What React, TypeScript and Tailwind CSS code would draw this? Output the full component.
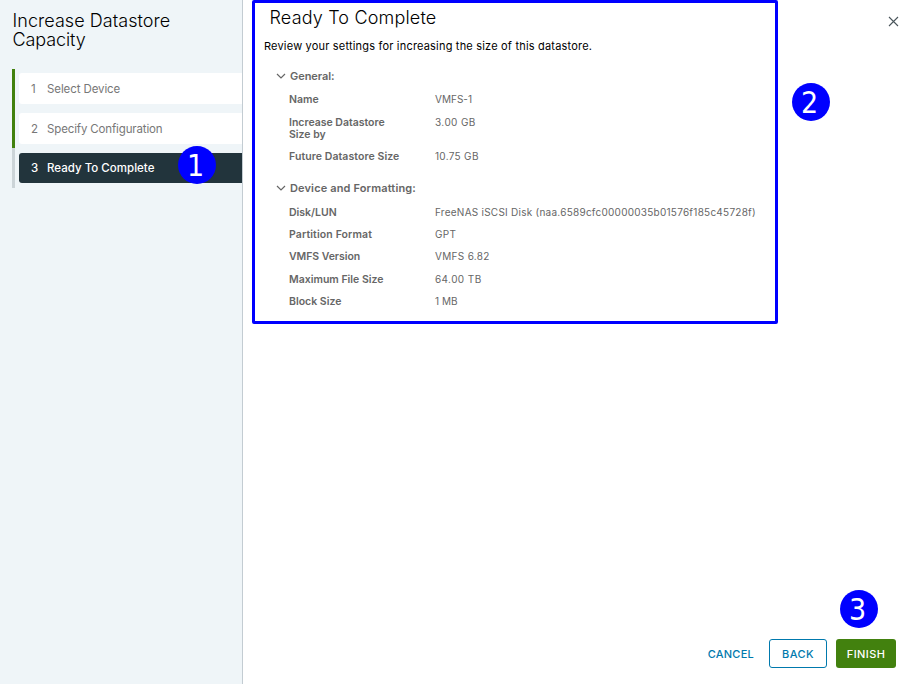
import React from "react";

function Badge({ n, className }: { n: number; className: string }) {
  return (
    <div
      className={`absolute z-10 flex h-[38px] w-[38px] items-center justify-center rounded-full bg-[#0000ff] pt-[1px] pr-[3px] font-['DejaVu_Sans_Condensed','DejaVu_Sans',sans-serif] text-[30px] leading-none [font-stretch:condensed] text-white ${className}`}
    >
      {n}
    </div>
  );
}

function Step({ n, label, className, text }: { n: number; label: string; className: string; text: string }) {
  return (
    <div className={`flex items-center rounded-l-[3px] pl-3 text-[11.5px] leading-[16px] ${className}`}>
      <span className="w-4">{n}</span>
      <span className={text}>{label}</span>
    </div>
  );
}

function SectionTitle({ label, className }: { label: string; className: string }) {
  return (
    <div className="flex h-4 items-center text-[11px] leading-4 font-semibold text-[#666]">
      <svg width="10" height="6" viewBox="0 0 10 6" className="mr-1" fill="none" stroke="#666" strokeWidth="1.2">
        <path d="M1 1l4 4 4-4" />
      </svg>
      <span className={className}>{label}</span>
    </div>
  );
}

function Row({ label, value, className, ls, vs }: { label: React.ReactNode; value: string; className: string; ls: string; vs: string }) {
  return (
    <div className={`flex items-start pl-[13px] leading-3 text-[#666] ${className}`}>
      <div className="w-[146px] shrink-0 text-[10.5px] font-semibold whitespace-nowrap">
        <span className={ls}>{label}</span>
      </div>
      <div className="text-[10px] leading-[11px] whitespace-nowrap">
        <span className={vs}>{value}</span>
      </div>
    </div>
  );
}

export default function App() {
  return (
    <div className="relative flex h-[684px] w-[900px] overflow-hidden bg-white font-['Inter',sans-serif]">
      <aside className="w-[243px] shrink-0 border-r border-[#c3ccd2] bg-[#eff5f8]">
        <h1 className="h-[69px] pt-[11px] pl-[12.5px] text-[18px] leading-[19px] font-light text-black">
          <span className="tracking-[0.05px]">Increase Datastore</span>
          <br />
          <span className="tracking-[-0.1px]">Capacity</span>
        </h1>
        <nav className="flex pl-3">
          <div className="w-[3px]">
            <div className="h-[79px] bg-[#42810e]" />
            <div className="h-[40px] bg-[#ccd4d8]" />
          </div>
          <div className="ml-1 flex flex-1 flex-col gap-[9px] pt-1">
            <Step n={1} label="Select Device" className="h-[31px] bg-white pt-[1px] text-[#777]" text="tracking-[-0.1px]" />
            <Step n={2} label="Specify Configuration" className="h-[31px] bg-white text-[#777]" text="tracking-[-0.14px]" />
            <Step n={3} label="Ready To Complete" className="h-[30px] bg-[#22343c] font-medium text-white" text="tracking-[0.02px]" />
          </div>
        </nav>
      </aside>

      <main className="flex flex-1 flex-col pl-[9px]">
        <div className="flex">
          <section className="h-[324px] w-[526px] rounded-[2px] border-[3px] border-[#0000ff] pt-[5px] pl-[9px]">
            <h2 className="pl-[5.5px] text-[18px] leading-5 font-light text-black">
              <span className="tracking-[0.17px]">Ready To Complete</span>
            </h2>
            <p className="mt-[10px] text-[11px] leading-4 text-black">
              <span className="tracking-[0.19px]">Review your settings for increasing the size of this datastore.</span>
            </p>
            <div className="pt-[14px] pl-3">
              <SectionTitle label="General:" className="tracking-[-0.05px]" />
              <Row label="Name" value="VMFS-1" className="mt-[10px]" ls="" vs="tracking-[0.02px]" />
              <Row label={<>Increase Datastore<br />Size by</>} value="3.00 GB" className="mt-[11px]" ls="" vs="tracking-[0.4px]" />
              <Row label="Future Datastore Size" value="10.75 GB" className="mt-[10px]" ls="tracking-[0.08px]" vs="tracking-[0.3px]" />
              <div className="h-[17px]" />
              <SectionTitle label="Device and Formatting:" className="tracking-[0.14px]" />
              <Row label="Disk/LUN" value="FreeNAS iSCSI Disk (naa.6589cfc00000035b01576f185c45728f)" className="mt-[11px]" ls="" vs="tracking-[0.25px]" />
              <Row label="Partition Format" value="GPT" className="mt-[10px]" ls="tracking-[0.12px]" vs="tracking-[0.3px]" />
              <Row label="VMFS Version" value="VMFS 6.82" className="mt-[10px]" ls="tracking-[-0.05px]" vs="tracking-[0.32px]" />
              <Row label="Maximum File Size" value="64.00 TB" className="mt-[11px]" ls="" vs="tracking-[0.4px]" />
              <Row label="Block Size" value="1 MB" className="mt-[10px]" ls="" vs="" />
            </div>
          </section>
          <button aria-label="Close" className="mt-4 ml-auto mr-[1px] flex h-[11px] w-[11px]">
            <svg width="11" height="11" viewBox="0 0 11 11" stroke="#4a555b" strokeWidth="1.1">
              <path d="M1 1l9 9M10 1l-9 9" />
            </svg>
          </button>
        </div>
        <footer className="mt-auto mb-4 flex h-[29px] items-center justify-end pr-1 text-[11px] font-medium">
          <button className="mr-[15px] pt-[2px] text-[#0079ad]">
            <span className="tracking-[0.25px]">CANCEL</span>
          </button>
          <button className="mr-[9px] h-[29px] w-[58px] rounded-[3px] border border-[#0079ad] pt-[2px] text-[#0079ad]">
            <span className="tracking-[0.4px]">BACK</span>
          </button>
          <button className="h-[29px] w-[60px] rounded-[3px] bg-[#42810e] pt-[2px] text-white">
            <span className="tracking-[0.4px]">FINISH</span>
          </button>
        </footer>
      </main>

      <Badge n={1} className="top-[146px] left-[178px]" />
      <Badge n={2} className="top-[83px] left-[792px]" />
      <Badge n={3} className="top-[590px] left-[840px]" />
    </div>
  );
}
